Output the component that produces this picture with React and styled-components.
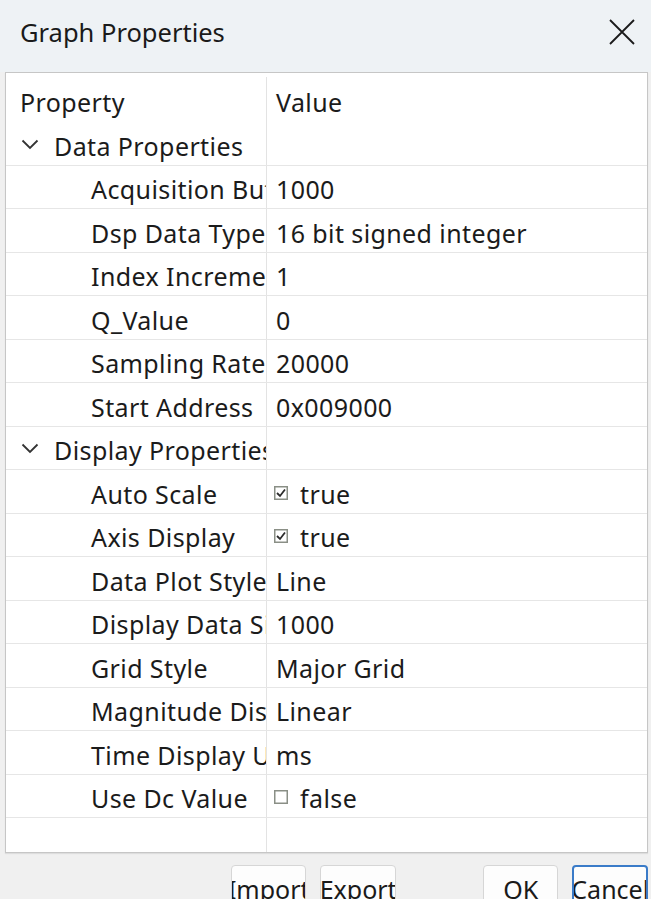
import React from "react";
import styled, { createGlobalStyle } from "styled-components";

const dataRows = [
	{ name: "Acquisition Buffer Size", value: "1000" },
	{ name: "Dsp Data Type", value: "16 bit signed integer" },
	{ name: "Index Increment", value: "1" },
	{ name: "Q_Value", value: "0" },
	{ name: "Sampling Rate", value: "20000" },
	{ name: "Start Address", value: "0x009000" },
];

const displayRows = [
	{ name: "Auto Scale", value: "true", check: true },
	{ name: "Axis Display", value: "true", check: true },
	{ name: "Data Plot Style", value: "Line" },
	{ name: "Display Data Size", value: "1000" },
	{ name: "Grid Style", value: "Major Grid" },
	{ name: "Magnitude Display", value: "Linear" },
	{ name: "Time Display Unit", value: "ms" },
	{ name: "Use Dc Value", value: "false", check: false },
];

function Chevron() {
	return (
		<ChevronIcon width="18" height="11" viewBox="0 0 18 11">
			<path d="M1.5 1.5 L9 9 L16.5 1.5" fill="none" stroke="#333" strokeWidth="1.8" />
		</ChevronIcon>
	);
}

function CheckBox({ checked }) {
	return (
		<svg width="14" height="14" viewBox="0 0 14 14">
			<rect x="0.75" y="0.75" width="12.5" height="12.5" fill="#fff" stroke="#8a8f86" strokeWidth="1.5" />
			{checked && (
				<path d="M3 7 L6 10 L11 3.5" fill="none" stroke="#2b2b2b" strokeWidth="1.8" />
			)}
		</svg>
	);
}

function PropRow({ row }) {
	return (
		<Row>
			<NameCell $indent={85}>{row.name}</NameCell>
			<ValueCell>
				{row.check !== undefined && <CheckBox checked={row.check} />}
				{row.value}
			</ValueCell>
		</Row>
	);
}

export default function App() {
	return (
		<>
			<GlobalStyle />
			<Window>
				<TitleBar>
					<Title>Graph Properties</Title>
					<CloseButton>
						<svg width="26" height="26" viewBox="0 0 26 26">
							<path d="M1 1 L25 25 M25 1 L1 25" stroke="#1a1a1a" strokeWidth="1.8" />
						</svg>
					</CloseButton>
				</TitleBar>
				<Body>
					<Grid>
						<HeaderRow>
							<NameCell $indent={14}>Property</NameCell>
							<ValueCell>Value</ValueCell>
						</HeaderRow>
						<Row>
							<NameCell $indent={15}>
								<Chevron />
								<GroupLabel>Data Properties</GroupLabel>
							</NameCell>
							<ValueCell />
						</Row>
						{dataRows.map((r) => (
							<PropRow key={r.name} row={r} />
						))}
						<Row>
							<NameCell $indent={15}>
								<Chevron />
								<GroupLabel>Display Properties</GroupLabel>
							</NameCell>
							<ValueCell />
						</Row>
						{displayRows.map((r) => (
							<PropRow key={r.name} row={r} />
						))}
						<FillRow>
							<NameCell />
							<ValueCell />
						</FillRow>
					</Grid>
					<ButtonBar>
						<Button>Import</Button>
						<Button>Export</Button>
						<Spacer />
						<Button>OK</Button>
						<Button $focused>Cancel</Button>
					</ButtonBar>
				</Body>
			</Window>
		</>
	);
}

const GlobalStyle = createGlobalStyle`
	body {
		margin: 0;
		background: #f0f0f0;
		font-family: "Noto Sans", "Open Sans", sans-serif;
		color: #1b1b1b;
	}
`;

const Window = styled.div`
	width: 651px;
	height: 899px;
	overflow: hidden;
	display: flex;
	flex-direction: column;
	background: #f0f0f0;
`;

const TitleBar = styled.div`
	height: 72px;
	flex-shrink: 0;
	display: flex;
	align-items: center;
	justify-content: space-between;
	padding: 0 14px 8px 20px;
	box-sizing: border-box;
	background: #eef2f5;
`;

const Title = styled.div`
	font-size: 25.5px;
	color: #1a1a1a;
`;

const CloseButton = styled.div`
	display: flex;
	align-items: center;
	justify-content: center;
	width: 26px;
	height: 26px;
	margin-right: 2px;
`;

const Body = styled.div`
	flex: 1;
	display: flex;
	flex-direction: column;
	padding: 0 3px 0 5px;
`;

const Grid = styled.div`
	height: 781px;
	box-sizing: border-box;
	background: #fff;
	border: 1px solid #c6c6c6;
	box-shadow: 0 1px 1px rgba(0, 0, 0, 0.08);
	display: flex;
	flex-direction: column;
	overflow: hidden;
`;

const Row = styled.div`
	display: flex;
	height: 43.5px;
	flex-shrink: 0;
	border-bottom: 1px solid #e6e6e6;
	box-sizing: border-box;
	font-size: 25px;
	line-height: 1;
	letter-spacing: 0.4px;
`;

const HeaderRow = styled(Row)`
	height: 49px;
	border-bottom: none;
	padding-top: 4px;
`;

const FillRow = styled(Row)`
	flex: 1;
	border-bottom: none;
`;

const NameCell = styled.div`
	width: 261px;
	flex-shrink: 0;
	display: flex;
	align-items: center;
	gap: 15px;
	padding-left: ${(p) => p.$indent || 0}px;
	padding-top: 6px;
	box-sizing: border-box;
	border-right: 1px solid #e3e3e3;
	white-space: nowrap;
	overflow: hidden;
`;

const ChevronIcon = styled.svg`
	flex-shrink: 0;
	margin-top: -4px;
`;

const GroupLabel = styled.span`
	white-space: nowrap;
`;

const ValueCell = styled.div`
	flex: 1;
	display: flex;
	align-items: center;
	gap: 12px;
	padding-left: 9px;
	padding-top: 6px;
	white-space: nowrap;
	overflow: hidden;

	svg {
		margin-left: -2px;
		margin-top: -3px;
	}
`;

const ButtonBar = styled.div`
	display: flex;
	align-items: flex-start;
	padding-top: 12px;
	padding-left: 226px;
	gap: 14px;
`;

const Spacer = styled.div`
	width: 62px;
`;

const Button = styled.div`
	width: 79px;
	height: 40px;
	box-sizing: border-box;
	display: flex;
	justify-content: center;
	align-items: center;
	padding-top: 8px;
	background: #fdfdfd;
	border: ${(p) => (p.$focused ? "2px solid #3a7bc8" : "1px solid #d6d6d6")};
	border-radius: 4px;
	font-size: 25px;
	color: #1a1a1a;
	white-space: nowrap;
	overflow: hidden;
`;
